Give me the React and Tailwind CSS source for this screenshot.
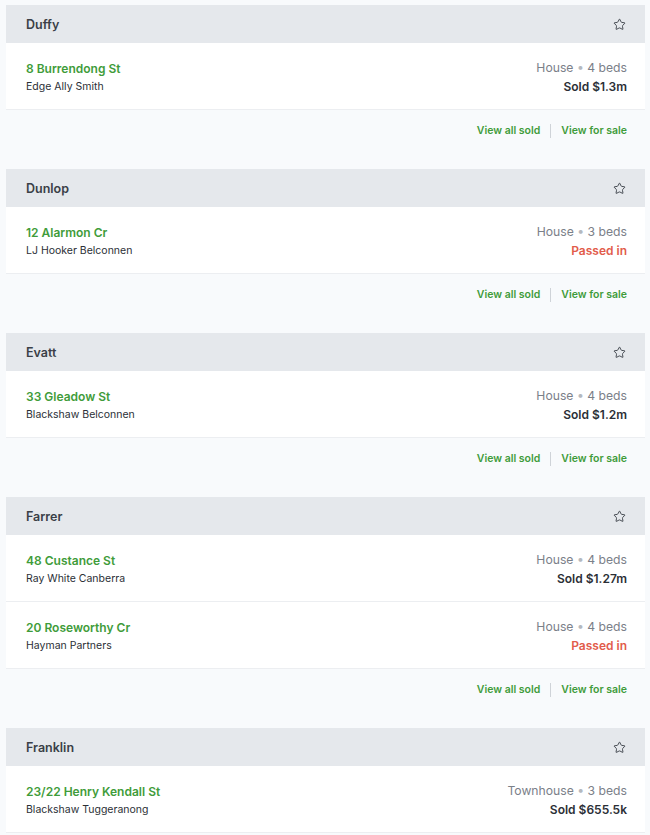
import React from "react";
import { Star } from "lucide-react";

const data = [
  {
    suburb: "Duffy",
    rows: [{ addr: "8 Burrendong St", agent: "Edge Ally Smith", type: "House", beds: 4, result: "Sold $1.3m" }],
  },
  {
    suburb: "Dunlop",
    rows: [{ addr: "12 Alarmon Cr", agent: "LJ Hooker Belconnen", type: "House", beds: 3, result: "Passed in", passed: true }],
  },
  {
    suburb: "Evatt",
    rows: [{ addr: "33 Gleadow St", agent: "Blackshaw Belconnen", type: "House", beds: 4, result: "Sold $1.2m" }],
  },
  {
    suburb: "Farrer",
    rows: [
      { addr: "48 Custance St", agent: "Ray White Canberra", type: "House", beds: 4, result: "Sold $1.27m" },
      { addr: "20 Roseworthy Cr", agent: "Hayman Partners", type: "House", beds: 4, result: "Passed in", passed: true },
    ],
  },
  {
    suburb: "Franklin",
    rows: [{ addr: "23/22 Henry Kendall St", agent: "Blackshaw Tuggeranong", type: "Townhouse", beds: 3, result: "Sold $655.5k" }],
  },
];

function Section({ s }) {
  return (
    <div className="mb-[19px]">
      <div className="h-[38px] bg-[#e5e8ec] flex items-center justify-between pl-[20px] pr-[19px] pt-[2px]">
        <span className="text-[12.5px] font-semibold text-[#3a3f47]">{s.suburb}</span>
        <Star size={13} strokeWidth={1.7} className="text-[#3a3f47] -mt-[2px]" />
      </div>
      {s.rows.map((r, i) => (
        <div key={i} className="h-[67px] bg-white border-b border-[#eceef1] flex items-center justify-between pl-[20px] pr-[18px] pt-[2px]">
          <div className="flex flex-col gap-[3px]">
            <span className="text-[12px] font-semibold text-[#3f9c3a] leading-[16px]">{r.addr}</span>
            <span className="text-[10.5px] text-[#2b2f36] leading-[14px]">{r.agent}</span>
          </div>
          <div className="flex flex-col items-end gap-[3px]">
            <span className="text-[12.2px] text-[#7b8089] leading-[16px]">
              {r.type} <span className="text-[#b5b9bf]">•</span> {r.beds} beds
            </span>
            <span className={"text-[12px] font-semibold leading-[16px] " + (r.passed ? "text-[#e25c4b]" : "text-[#2b2f36]")}>
              {r.result}
            </span>
          </div>
        </div>
      ))}
      <div className="h-[40px] flex items-center justify-end pr-[18px] pt-[2px]">
        <span className="text-[10.5px] font-semibold text-[#3f9c3a]">View all sold</span>
        <span className="mx-[10px] w-px h-[14px] bg-[#cfd3d8]"></span>
        <span className="text-[10.5px] font-semibold text-[#3f9c3a]">View for sale</span>
      </div>
    </div>
  );
}

export default function App() {
  return (
    <div className="h-[835px] overflow-hidden bg-[#f8fafc] pt-[5px] pl-[6px] pr-[5px]" style={{ fontFamily: "Inter, 'Noto Sans', sans-serif" }}>
      {data.map((s) => (
        <Section key={s.suburb} s={s} />
      ))}
    </div>
  );
}
